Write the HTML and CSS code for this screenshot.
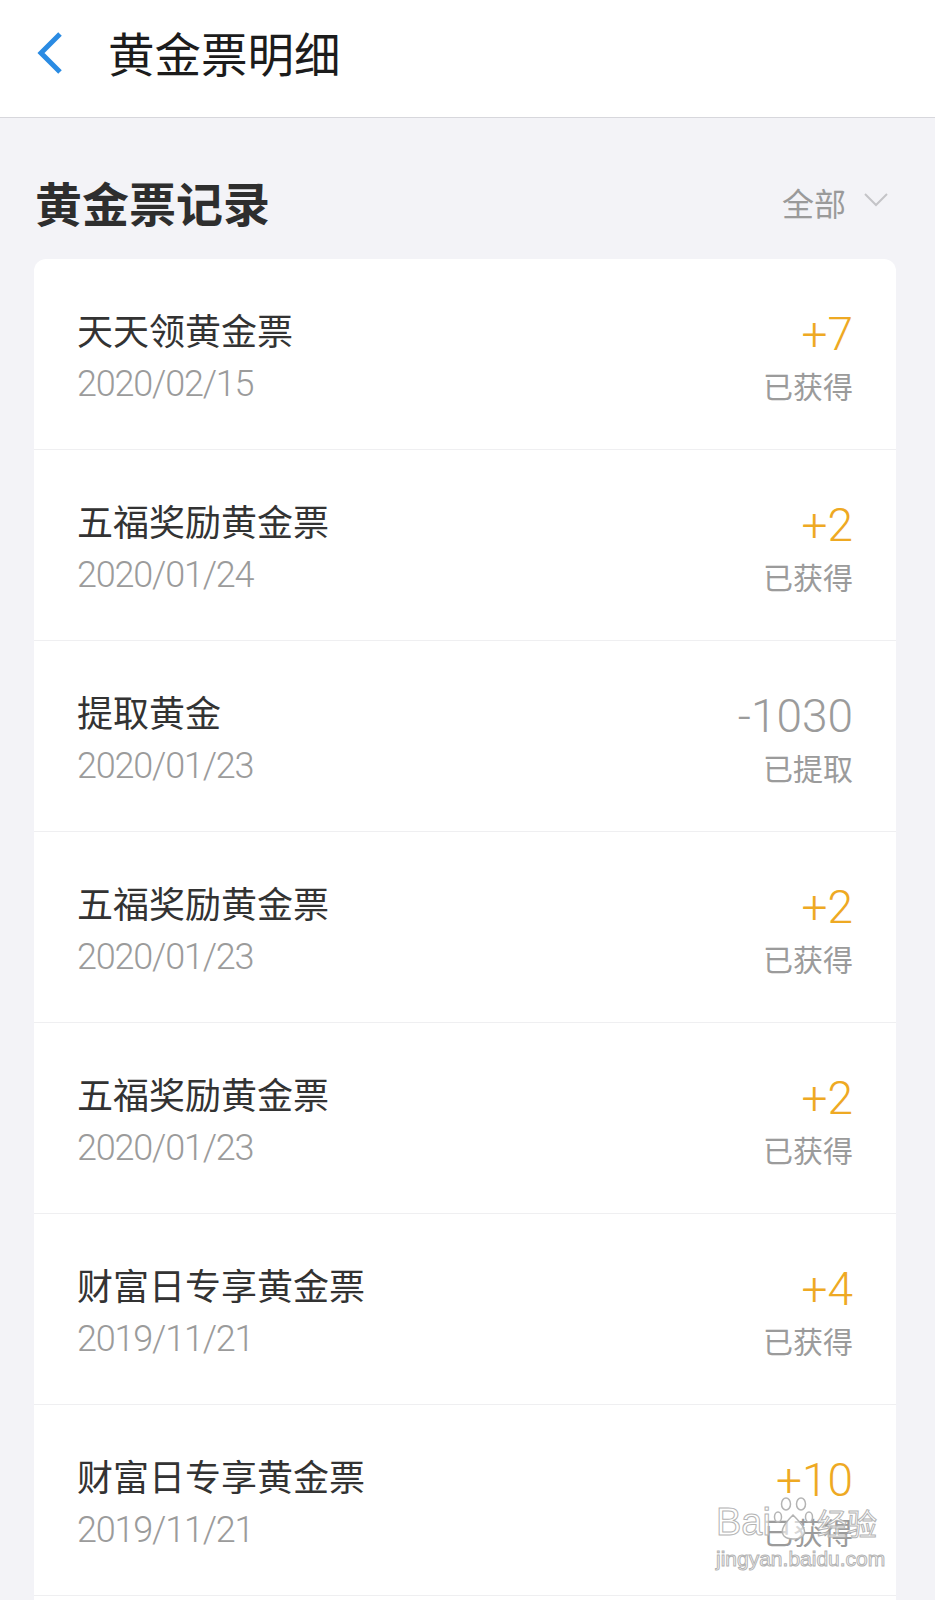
FILE: index.html
```html
<!DOCTYPE html>
<html lang="zh-CN">
<head>
    <meta charset="UTF-8">
    <title>黄金票明细</title>
    <meta name="viewport" content="width=device-width, initial-scale=1.0">
    <link rel="stylesheet" href="styles.css">
</head>
<body>
    <div class="page">
        <header class="nav">
            <svg class="back" width="32" height="44" viewBox="0 0 32 44">
                <path d="M26 3 L7 22 L26 41" fill="none" stroke="#2a8be3" stroke-width="5"/>
            </svg>
            <h1>黄金票明细</h1>
        </header>

        <div class="section-head">
            <h2>黄金票记录</h2>
            <div class="filter">
                <span>全部</span>
                <svg width="24" height="16" viewBox="0 0 24 16">
                    <path d="M1 2 L12 13 L23 2" fill="none" stroke="#c4c4c8" stroke-width="2"/>
                </svg>
            </div>
        </div>

        <div class="card">
            <div class="row">
                <div class="left"><p class="name">天天领黄金票</p><p class="date">2020/02/15</p></div>
                <div class="right"><p class="amount gain">+7</p><p class="status">已获得</p></div>
            </div>
            <div class="row">
                <div class="left"><p class="name">五福奖励黄金票</p><p class="date">2020/01/24</p></div>
                <div class="right"><p class="amount gain">+2</p><p class="status">已获得</p></div>
            </div>
            <div class="row">
                <div class="left"><p class="name">提取黄金</p><p class="date">2020/01/23</p></div>
                <div class="right"><p class="amount">-1030</p><p class="status">已提取</p></div>
            </div>
            <div class="row">
                <div class="left"><p class="name">五福奖励黄金票</p><p class="date">2020/01/23</p></div>
                <div class="right"><p class="amount gain">+2</p><p class="status">已获得</p></div>
            </div>
            <div class="row">
                <div class="left"><p class="name">五福奖励黄金票</p><p class="date">2020/01/23</p></div>
                <div class="right"><p class="amount gain">+2</p><p class="status">已获得</p></div>
            </div>
            <div class="row">
                <div class="left"><p class="name">财富日专享黄金票</p><p class="date">2019/11/21</p></div>
                <div class="right"><p class="amount gain">+4</p><p class="status">已获得</p></div>
            </div>
            <div class="row">
                <div class="left"><p class="name">财富日专享黄金票</p><p class="date">2019/11/21</p></div>
                <div class="right"><p class="amount gain">+10</p><p class="status">已获得</p></div>
            </div>
            <div class="row"></div>
        </div>

        <div class="watermark">
            <div class="wm-logo">
                <span>Bai</span>
                <svg width="42" height="46" viewBox="0 0 42 46">
                    <g fill="rgba(255,255,255,0.6)" stroke="#b4b4b4" stroke-width="1.5">
                        <ellipse cx="13" cy="8" rx="4.5" ry="6"/>
                        <ellipse cx="28" cy="8" rx="4.5" ry="6"/>
                        <ellipse cx="5" cy="21" rx="3.5" ry="5"/>
                        <ellipse cx="36" cy="21" rx="3.5" ry="5"/>
                        <path d="M20 19 C13 26 6 34 11 40 C15 44 25 44 30 40 C35 34 27 26 20 19 Z"/>
                    </g>
                </svg>
                <span class="cn">经验</span>
            </div>
            <div class="wm-url">jingyan.baidu.com</div>
        </div>
    </div>
</body>
</html>
```

FILE: styles.css
```css
* {
    margin: 0;
    padding: 0;
    box-sizing: border-box;
}
body {
    margin: 0;
    background: #f3f3f7;
    font-family: "Noto Sans CJK SC", "Noto Sans", sans-serif;
}
.page {
    position: relative;
    height: 1600px;
    overflow: hidden;
}
.nav {
    height: 118px;
    background: #fff;
    border-bottom: 1px solid #d7d7dc;
    display: flex;
    align-items: center;
    padding-left: 34px;
    padding-bottom: 12px;
}
.back {
    display: block;
    margin-right: 42px;
}
.nav h1 {
    font-size: 46.5px;
    font-weight: 400;
    color: #1c1c1c;
    line-height: 1;
}
.section-head {
    display: flex;
    justify-content: space-between;
    align-items: flex-start;
    padding: 54px 47px 0 35px;
    height: 141px;
}
.section-head h2 {
    font-size: 47px;
    font-weight: 700;
    color: #2e2e2e;
    line-height: 60px;
}
.filter {
    display: flex;
    align-items: center;
    gap: 18px;
    height: 60px;
    color: #9a9a9a;
    font-size: 32px;
}
.filter svg {
    margin-top: -4px;
}
.card {
    margin: 0 39px 0 34px;
    background: #fff;
    border-radius: 12px;
}
.row {
    height: 191px;
    border-bottom: 1px solid #efeff1;
    display: flex;
    align-items: center;
    justify-content: space-between;
    padding: 6px 43px 0 43px;
}
.name {
    font-size: 36px;
    line-height: 48px;
    color: #333;
}
.date {
    font-family: Roboto, "Noto Sans", sans-serif;
    font-weight: 300;
    font-size: 36px;
    line-height: 50px;
    letter-spacing: -1.2px;
    color: #9b9b9b;
    margin-top: 6px;
}
.right {
    text-align: right;
}
.amount {
    font-family: Roboto, "Noto Sans", sans-serif;
    font-weight: 300;
    font-size: 46px;
    line-height: 56px;
    color: #9b9b9b;
}
.amount.gain {
    color: #eea923;
}
.status {
    font-size: 30px;
    line-height: 46px;
    color: #9b9b9b;
}
.watermark {
    position: absolute;
    left: 716px;
    top: 1496px;
    color: rgba(255, 255, 255, 0.6);
    -webkit-text-stroke: 1px #b4b4b4;
}
.wm-logo {
    display: flex;
    align-items: flex-end;
    font-family: "Liberation Sans", sans-serif;
    font-size: 38px;
    line-height: 44px;
}
.wm-logo svg {
    margin: 0 2px 2px;
}
.wm-logo .cn {
    font-family: "Noto Sans CJK SC", sans-serif;
    font-size: 30px;
    line-height: 44px;
}
.wm-url {
    font-family: "Liberation Sans", sans-serif;
    font-size: 21px;
    line-height: 30px;
}
```
